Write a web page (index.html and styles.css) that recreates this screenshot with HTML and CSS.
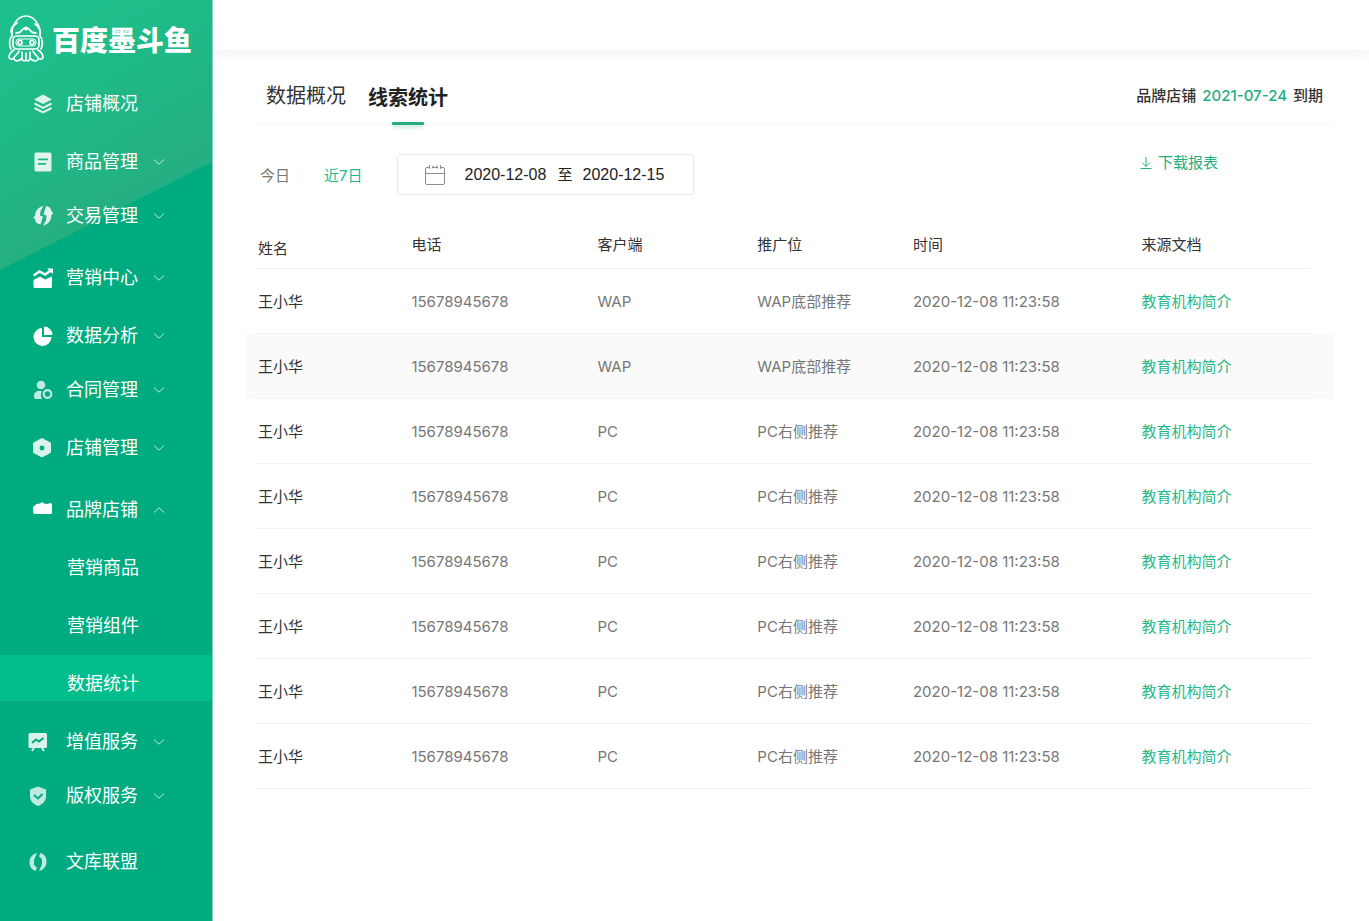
FILE: index.html
```html
<!DOCTYPE html>
<html lang="zh-CN">
<head>
<meta charset="utf-8">
<title>百度墨斗鱼 - 线索统计</title>
<link rel="stylesheet" href="styles.css">
</head>
<body>
<svg class="sprite" aria-hidden="true">
  <symbol id="chevron" viewBox="0 0 12 8"><path d="M1 1.500 6 6.200 11 1.500" fill="none" stroke="currentColor" stroke-width="1"/></symbol>
</svg>
<div class="app">
  <aside class="sidebar">
    <a class="brand" href="#">
      <svg class="brand-mark" viewBox="0 0 36 47" fill="none" stroke="currentColor" stroke-width="1.700" stroke-linecap="round" stroke-linejoin="round" aria-hidden="true">
        <path d="M4 21C3 10 10 1 18 1s15 9 14 20"/>
        <path d="M9 8C4 11 2 15 4 19M27 9c4 3 6 6 5 10"/>
        <path d="M8 18c4 0 5-1 6-3 2-3 6-3 8 0 1 2 2 3 6 3"/>
        <circle cx="18" cy="13.500" r="1.200" fill="currentColor"/>
        <path d="M4 21C1 24 1 30 3 34M32 21c3 3 3 9 1 13"/>
        <rect x="5" y="21" width="26" height="13" rx="4"/>
        <rect x="8" y="24" width="20" height="7" rx="3" stroke-width="1"/>
        <circle cx="12" cy="27.500" r="2"/><circle cx="24" cy="27.500" r="2"/>
        <path d="M6 35c-3 2-5 4-5 7 0 2 3 3 5 1M30 35c3 2 5 4 5 7 0 2-3 3-5 1"/>
        <path d="M11 36c-1 4-6 5-5 8s6 2 8-1M25 36c1 4 6 5 5 8s-6 2-8-1M14 37v7c1 3 4 2 4 0 0 2 3 3 4 0v-7M18 38v5"/>
      </svg>
      <span class="brand-name">百度墨斗鱼</span>
    </a>
    <nav>
      <ul class="nav">
        <li><a class="nav-item" href="#">
          <svg class="nav-icon" viewBox="0 0 20 20" aria-hidden="true"><path d="M10 .500 19 5.500 10 10 1 5.500Z" fill="currentColor"/><path d="m1.500 9.500 8.500 4.300 8.500-4.300M1.500 14l8.500 4.300 8.500-4.300" fill="none" stroke="currentColor" stroke-width="2"/></svg>
          <span>店铺概况</span></a></li>
        <li><button class="nav-item" type="button">
          <svg class="nav-icon" viewBox="0 0 20 20" aria-hidden="true"><path fill="currentColor" fill-rule="evenodd" d="M3 .500h14a1.500 1.500 0 0 1 1.500 1.500v16a1.500 1.500 0 0 1-1.500 1.500H3A1.500 1.500 0 0 1 1.500 18V2A1.500 1.500 0 0 1 3 .500ZM5 6.500v1.700h10V6.500ZM5 11v1.700h8V11Z"/></svg>
          <span>商品管理</span><svg class="chevron"><use href="#chevron"/></svg></button></li>
        <li class="tight"><button class="nav-item" type="button">
          <svg class="nav-icon" viewBox="0 0 20 20" aria-hidden="true"><path fill="currentColor" d="M10.500 0 7.500 5 7 9.500l3 1-2.500 8C4 18 2 16 2 13L0 11.500 2 10C2 5 5.500 1 10.500 0ZM13 0c3.500.500 5.500 3 5.500 5.500L20.500 7l-2 2c0 5.500-3.500 9.500-8.500 10.500l3-5 .500-5-3-1Z"/></svg>
          <span>交易管理</span><svg class="chevron"><use href="#chevron"/></svg></button></li>
        <li class="loose"><button class="nav-item" type="button">
          <svg class="nav-icon solid" viewBox="0 0 20 20" aria-hidden="true"><path d="m.500 7.500 6-4 5.500 3L18 2.500" fill="none" stroke="currentColor" stroke-width="2.400"/><path fill="currentColor" d="M14 .500h6V6ZM.500 12 7 8.500l5 3 7-3v10a1.500 1.500 0 0 1-1.500 1.500H2A1.500 1.500 0 0 1 .500 18.500Z"/></svg>
          <span>营销中心</span><svg class="chevron"><use href="#chevron"/></svg></button></li>
        <li><button class="nav-item" type="button">
          <svg class="nav-icon solid" viewBox="0 0 20 20" aria-hidden="true"><path fill="currentColor" d="M9 2v9h9.500A9 9 0 1 1 9 2Z"/><path fill="currentColor" d="M11 .500A8.500 8.500 0 0 1 19.500 9H11Z"/></svg>
          <span>数据分析</span><svg class="chevron"><use href="#chevron"/></svg></button></li>
        <li class="tight"><button class="nav-item" type="button">
          <svg class="nav-icon faint" viewBox="0 0 20 20" aria-hidden="true"><circle cx="8" cy="5" r="4.300" fill="currentColor"/><path fill="currentColor" d="M1 16c0-3 2-5 5-5h3c-1.500 2.500-1.500 5.500 0 8H3c-1.500 0-2-1-2-3Z"/><circle cx="14.500" cy="14" r="3.800" fill="none" stroke="currentColor" stroke-width="2.200"/></svg>
          <span>合同管理</span><svg class="chevron"><use href="#chevron"/></svg></button></li>
        <li><button class="nav-item" type="button">
          <svg class="nav-icon" viewBox="0 0 20 20" aria-hidden="true"><path fill="currentColor" fill-rule="evenodd" stroke="currentColor" stroke-linejoin="round" d="m9 .500 8.500 4.500v9.500L9 19 .500 14.500V5ZM9 7a3 3 0 1 0 0 6 3 3 0 0 0 0-6Z"/></svg>
          <span>店铺管理</span><svg class="chevron"><use href="#chevron"/></svg></button></li>
        <li class="loose"><button class="nav-item" type="button" aria-expanded="true">
          <svg class="nav-icon solid" viewBox="0 0 20 20" aria-hidden="true"><path fill="currentColor" d="M0 12.500V7l3.500-3L7 3.500 9 2l2 1.500L14 4l4-1 1 1v9.500L17.500 14H1.500Z"/></svg>
          <span>品牌店铺</span><svg class="chevron up"><use href="#chevron"/></svg></button></li>
        <li><a class="nav-item sub" href="#">营销商品</a></li>
        <li><a class="nav-item sub" href="#">营销组件</a></li>
        <li><a class="nav-item sub current" href="#" aria-current="page">数据统计</a></li>
        <li><button class="nav-item service" type="button">
          <svg class="nav-icon" viewBox="0 0 20 20" aria-hidden="true"><path fill="currentColor" d="M2 1h15.500A1.500 1.500 0 0 1 19 2.500v12a1.500 1.500 0 0 1-1.500 1.500H2A1.500 1.500 0 0 1 .500 14.500v-12A1.500 1.500 0 0 1 2 1Z"/><path d="m4 11 4-3.500 3 2L15.500 6" fill="none" stroke="#00ab7f" stroke-width="2"/><path d="m6 16-2 3M14 16l2 3" stroke="currentColor" stroke-width="2"/></svg>
          <span>增值服务</span><svg class="chevron"><use href="#chevron"/></svg></button></li>
        <li class="tight"><button class="nav-item service" type="button">
          <svg class="nav-icon faint" viewBox="0 0 20 20" aria-hidden="true"><path fill="currentColor" d="m10 .500 8 3V10c0 5-3 8-8 10-5-2-8-5-8-10V3.500Z"/><path d="m6 9 4 3.500L14.500 8" fill="none" stroke="#00ab7f" stroke-width="2"/></svg>
          <span>版权服务</span><svg class="chevron"><use href="#chevron"/></svg></button></li>
        <li class="apart"><a class="nav-item service" href="#">
          <svg class="nav-icon faint" viewBox="0 0 20 20" aria-hidden="true"><path fill="currentColor" d="M9 1 7 5.500 6 8v5l3 2.500L7.500 19C4 18 1.500 14.500 1.500 10.500 1.500 5.500 4.500 2 9 1ZM12.500 1c4 1 6 4.500 6 8.500 0 5-3 8.500-7.500 9.500l2-4.500L14 12V7l-3-2.500Z"/></svg>
          <span>文库联盟</span></a></li>
      </ul>
    </nav>
  </aside>

  <div class="page">
    <header class="topbar"></header>
    <main>
      <div class="heading">
        <nav class="tabs">
          <a class="tab" href="#">数据概况</a>
          <a class="tab active" href="#" aria-current="page">线索统计</a>
        </nav>
        <p class="expiry">品牌店铺 <span class="accent">2021-07-24</span> 到期</p>
      </div>

      <div class="filters">
        <button class="range" type="button">今日</button>
        <button class="range selected" type="button">近7日</button>
        <div class="dates">
          <svg class="calendar" viewBox="0 0 20 20" fill="none" stroke="#8c8c8c" aria-hidden="true"><path d="M4 2.500H2A1.500 1.500 0 0 0 .500 4v14A1.500 1.500 0 0 0 2 19.500h16a1.500 1.500 0 0 0 1.500-1.500V4A1.500 1.500 0 0 0 18 2.500h-2M.500 8.500h19M4.500 0v4M8 .500v3M12 .500v3M15.500 0v4M7 2.500h6"/></svg>
          <input class="date" type="text" value="2020-12-08" aria-label="开始日期">
          <span class="to">至</span>
          <input class="date" type="text" value="2020-12-15" aria-label="结束日期">
        </div>
        <a class="download" href="#">
          <svg class="download-icon" viewBox="0 0 12 12" fill="none" stroke="currentColor" aria-hidden="true"><path d="M6 0v9M2 5.500l4 4 4-4M.500 11.500h11"/></svg>
          下载报表</a>
      </div>

      <table class="leads">
        <colgroup><col class="c-name"><col class="c-phone"><col class="c-client"><col class="c-slot"><col class="c-time"><col></colgroup>
        <thead>
          <tr><th class="name">姓名</th><th>电话</th><th>客户端</th><th>推广位</th><th>时间</th><th>来源文档</th></tr>
        </thead>
        <tbody>
          <tr><td class="name">王小华</td><td>15678945678</td><td>WAP</td><td>WAP底部推荐</td><td>2020-12-08 11:23:58</td><td><a href="#">教育机构简介</a></td></tr>
          <tr class="hover"><td class="name">王小华</td><td>15678945678</td><td>WAP</td><td>WAP底部推荐</td><td>2020-12-08 11:23:58</td><td><a href="#">教育机构简介</a></td></tr>
          <tr><td class="name">王小华</td><td>15678945678</td><td>PC</td><td>PC右侧推荐</td><td>2020-12-08 11:23:58</td><td><a href="#">教育机构简介</a></td></tr>
          <tr><td class="name">王小华</td><td>15678945678</td><td>PC</td><td>PC右侧推荐</td><td>2020-12-08 11:23:58</td><td><a href="#">教育机构简介</a></td></tr>
          <tr><td class="name">王小华</td><td>15678945678</td><td>PC</td><td>PC右侧推荐</td><td>2020-12-08 11:23:58</td><td><a href="#">教育机构简介</a></td></tr>
          <tr><td class="name">王小华</td><td>15678945678</td><td>PC</td><td>PC右侧推荐</td><td>2020-12-08 11:23:58</td><td><a href="#">教育机构简介</a></td></tr>
          <tr><td class="name">王小华</td><td>15678945678</td><td>PC</td><td>PC右侧推荐</td><td>2020-12-08 11:23:58</td><td><a href="#">教育机构简介</a></td></tr>
          <tr><td class="name">王小华</td><td>15678945678</td><td>PC</td><td>PC右侧推荐</td><td>2020-12-08 11:23:58</td><td><a href="#">教育机构简介</a></td></tr>
        </tbody>
      </table>
    </main>
  </div>
</div>
</body>
</html>
```

FILE: styles.css
```css
* { box-sizing: border-box; }

body {
  margin: 0;
  background: #fff;
  color: #333;
  font: 15px/20px Inter, "Noto Sans CJK SC", sans-serif;
}

a { color: inherit; text-decoration: none; }

button {
  border: 0;
  padding: 0;
  background: none;
  color: inherit;
  font: inherit;
  cursor: pointer;
}

.sprite { display: none; }

.app { display: flex; min-height: 100vh; }

/* Sidebar */
.sidebar {
  position: relative;
  flex: 0 0 213px;
  border-right: 1px solid #7fd5bf;
  background: #00ab7f;
  color: #fff;
}

.sidebar::before {
  content: "";
  position: absolute;
  inset: 0 0 auto;
  height: 270px;
  background: linear-gradient(150deg, #1dc08c 10%, #26ab80 85%);
  clip-path: polygon(0 0, 100% 0, 100% 60%, 0 100%);
}

.brand {
  position: relative;
  display: flex;
  align-items: center;
  gap: 8px;
  padding: 15px 8px 13px;
}

.brand-mark { flex: none; width: 36px; height: 47px; }

.brand-name {
  padding-top: 4px;
  font-size: 28px;
  line-height: 32px;
  font-weight: 900;
  white-space: nowrap;
}

.nav {
  position: relative;
  display: flex;
  flex-direction: column;
  margin: 0;
  padding: 0;
  list-style: none;
}

.nav li + li { margin-top: 12px; }
.nav li.tight { margin-top: 8px; }
.nav li.loose { margin-top: 16px; }
.nav li.apart { margin-top: 20px; }

.nav-item {
  display: flex;
  align-items: center;
  gap: 13px;
  width: 100%;
  height: 46px;
  padding: 12px 0 0 33px;
  font-size: 18px;
  line-height: 26px;
  text-align: left;
}

.nav-item.service { padding-left: 28px; }
.nav-item.service .nav-icon { margin-right: 5px; }
.nav-item.sub { padding-left: 67px; }
.nav-item.current { background: #00bd8b; }

.nav-icon { flex: none; width: 20px; height: 20px; opacity: .85; }
.nav-icon.solid { opacity: 1; }
.nav-icon.faint { opacity: .75; }

.chevron { flex: none; width: 12px; height: 8px; margin-left: 2px; opacity: .75; }
.chevron.up { transform: rotate(180deg); }

/* Page */
.page { flex: 1; min-width: 0; }

.topbar {
  height: 50px;
  background: #fff;
  box-shadow: 0 4px 12px rgba(0, 0, 0, .06);
}

.heading {
  display: flex;
  justify-content: space-between;
  height: 75px;
  margin: 0 36px 0 43px;
  padding: 31px 10px 0;
  border-bottom: 1px solid #f6f6f6;
}

.tabs { display: flex; gap: 22px; font-size: 20px; line-height: 30px; }
.tab.active { position: relative; color: #222; font-weight: 700; line-height: 34px; }

.tab.active::after {
  content: "";
  position: absolute;
  right: 24px;
  bottom: -1px;
  left: 24px;
  height: 3px;
  border-radius: 1px;
  background: #25ad80;
  box-shadow: 0 2px 4px rgba(37, 173, 128, .35);
}

.expiry { margin: 0; font-weight: 500; line-height: 30px; }
.accent { margin: 0 2px; color: #25ad80; }

.filters {
  display: flex;
  align-items: center;
  margin: 29px 36px 27px 47px;
}

.range { margin-right: 34px; padding-top: 2px; color: #777; }
.range.selected { color: #1fb98c; }

.dates {
  display: flex;
  align-items: center;
  width: 297px;
  height: 41px;
  padding-left: 27px;
  border: 1px solid #ebebeb;
  border-radius: 3px;
  background: #fff;
  color: #222;
}

.calendar { flex: none; width: 20px; height: 20px; margin-right: 20px; }

.date {
  width: 83px;
  border: 0;
  padding: 0;
  background: none;
  color: inherit;
  font: 16px/20px "Liberation Sans", sans-serif;
}

.to { margin: 0 10px; }

.download {
  display: flex;
  align-items: center;
  align-self: flex-start;
  gap: 6px;
  margin-right: 115px;
  margin-left: auto;
  color: #25ad80;
  line-height: 18px;
}

.download-icon { width: 12px; height: 12px; }

/* Table */
.leads {
  width: calc(100% - 68px);
  margin: 0 35px 0 33px;
  border-collapse: collapse;
  table-layout: fixed;
}

.c-name { width: 15.2%; }
.c-phone { width: 17.1%; }
.c-client { width: 14.7%; }
.c-slot { width: 14.3%; }
.c-time { width: 21%; }

/* Row rule is inset from both ends of the row */
.leads tr {
  height: 65px;
  background: linear-gradient(#f3f3f3, #f3f3f3) 10px 100% / calc(100% - 32px) 1px no-repeat;
}

.leads thead tr { height: 47px; }
.leads tr.hover { background-color: #fafafa; }

.leads th, .leads td {
  padding: 0;
  text-align: left;
  white-space: nowrap;
}

.leads th { padding-bottom: 2px; font-weight: 400; }
.leads td { color: #777; }
.leads .name { padding-left: 12px; }
.leads th.name { padding-top: 8px; }
.leads td.name { color: #333; }
.leads a { color: #1fb98c; }
```
